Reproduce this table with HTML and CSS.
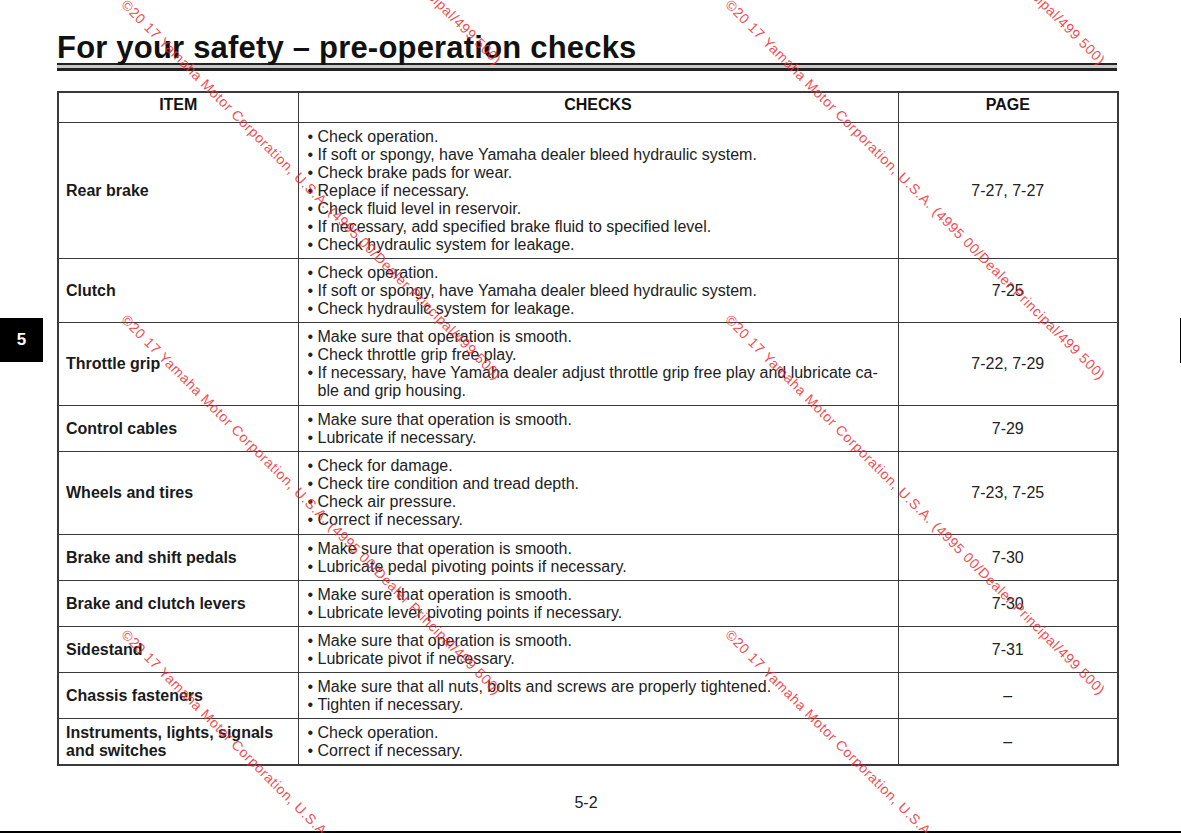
FILE: index.html
```html
<!DOCTYPE html>
<html>
<head>
<meta charset="utf-8">
<title>For your safety – pre-operation checks</title>
<link rel="stylesheet" href="styles.css">
</head>
<body>
<div class="page">
  <div class="margin-left">
    <div class="tab">5</div>
  </div>
  <main class="content">
    <h1 class="title">For your safety – pre-operation checks</h1>
    <div class="rule"></div>
    <table class="checks">
      <colgroup>
        <col class="col-item">
        <col class="col-checks">
        <col class="col-page">
      </colgroup>
      <thead>
        <tr><th>ITEM</th><th>CHECKS</th><th>PAGE</th></tr>
      </thead>
      <tbody>
        <tr>
          <td class="item">Rear brake</td>
          <td class="list"><ul>
            <li>Check operation.</li>
            <li>If soft or spongy, have Yamaha dealer bleed hydraulic system.</li>
            <li>Check brake pads for wear.</li>
            <li>Replace if necessary.</li>
            <li>Check fluid level in reservoir.</li>
            <li>If necessary, add specified brake fluid to specified level.</li>
            <li>Check hydraulic system for leakage.</li>
          </ul></td>
          <td class="pg">7-27, 7-27</td>
        </tr>
        <tr>
          <td class="item">Clutch</td>
          <td class="list"><ul>
            <li>Check operation.</li>
            <li>If soft or spongy, have Yamaha dealer bleed hydraulic system.</li>
            <li>Check hydraulic system for leakage.</li>
          </ul></td>
          <td class="pg">7-25</td>
        </tr>
        <tr class="tall">
          <td class="item">Throttle grip</td>
          <td class="list"><ul>
            <li>Make sure that operation is smooth.</li>
            <li>Check throttle grip free play.</li>
            <li class="nowrap">If necessary, have Yamaha dealer adjust throttle grip free play and lubricate ca-<br>ble and grip housing.</li>
          </ul></td>
          <td class="pg">7-22, 7-29</td>
        </tr>
        <tr>
          <td class="item">Control cables</td>
          <td class="list"><ul>
            <li>Make sure that operation is smooth.</li>
            <li>Lubricate if necessary.</li>
          </ul></td>
          <td class="pg">7-29</td>
        </tr>
        <tr class="tall">
          <td class="item">Wheels and tires</td>
          <td class="list"><ul>
            <li>Check for damage.</li>
            <li>Check tire condition and tread depth.</li>
            <li>Check air pressure.</li>
            <li>Correct if necessary.</li>
          </ul></td>
          <td class="pg">7-23, 7-25</td>
        </tr>
        <tr>
          <td class="item">Brake and shift pedals</td>
          <td class="list"><ul>
            <li>Make sure that operation is smooth.</li>
            <li>Lubricate pedal pivoting points if necessary.</li>
          </ul></td>
          <td class="pg">7-30</td>
        </tr>
        <tr>
          <td class="item">Brake and clutch levers</td>
          <td class="list"><ul>
            <li>Make sure that operation is smooth.</li>
            <li>Lubricate lever pivoting points if necessary.</li>
          </ul></td>
          <td class="pg">7-30</td>
        </tr>
        <tr>
          <td class="item">Sidestand</td>
          <td class="list"><ul>
            <li>Make sure that operation is smooth.</li>
            <li>Lubricate pivot if necessary.</li>
          </ul></td>
          <td class="pg">7-31</td>
        </tr>
        <tr>
          <td class="item">Chassis fasteners</td>
          <td class="list"><ul>
            <li>Make sure that all nuts, bolts and screws are properly tightened.</li>
            <li>Tighten if necessary.</li>
          </ul></td>
          <td class="pg">–</td>
        </tr>
        <tr>
          <td class="item">Instruments, lights, signals and switches</td>
          <td class="list"><ul>
            <li>Check operation.</li>
            <li>Correct if necessary.</li>
          </ul></td>
          <td class="pg">–</td>
        </tr>
      </tbody>
    </table>
    <div class="pagenum">5-2</div>
  </main>
  <div class="margin-right">
    <div class="edge-mark"></div>
  </div>
  <div class="bottom-line"></div>

  <div class="watermarks">
    <span class="wm wm-a1">©20 17 Yamaha Motor Corporation, U.S.A. (4995 00/Dealer Principal/499 500)</span>
    <span class="wm wm-a2">©20 17 Yamaha Motor Corporation, U.S.A. (4995 00/Dealer Principal/499 500)</span>
    <span class="wm wm-a3">©20 17 Yamaha Motor Corporation, U.S.A. (4995 00/Dealer Principal/499 500)</span>
    <span class="wm wm-a4">©20 17 Yamaha Motor Corporation, U.S.A. (4995 00/Dealer Principal/499 500)</span>
    <span class="wm wm-b1">©20 17 Yamaha Motor Corporation, U.S.A. (4995 00/Dealer Principal/499 500)</span>
    <span class="wm wm-b2">©20 17 Yamaha Motor Corporation, U.S.A. (4995 00/Dealer Principal/499 500)</span>
    <span class="wm wm-b3">©20 17 Yamaha Motor Corporation, U.S.A. (4995 00/Dealer Principal/499 500)</span>
    <span class="wm wm-b4">©20 17 Yamaha Motor Corporation, U.S.A. (4995 00/Dealer Principal/499 500)</span>
  </div>
</div>
</body>
</html>
```
FILE: styles.css
```css
* { box-sizing: border-box; }
html, body {
  margin: 0;
  padding: 0;
  background: #fff;
}
body {
  font-family: "Liberation Sans", Arial, Helvetica, sans-serif;
  color: #222;
  width: 1181px;
  height: 833px;
  overflow: hidden;
}
.page {
  position: relative;
  width: 1181px;
  height: 833px;
  display: grid;
  grid-template-columns: 57px 1060px 1fr;
  grid-template-rows: 831px 2px;
  overflow: hidden;
}
.margin-left {
  padding-top: 318px;
}
.tab {
  width: 43px;
  height: 44px;
  background: #000;
  color: #fff;
  font-weight: bold;
  font-size: 17px;
  display: flex;
  align-items: center;
  justify-content: center;
}
.margin-right {
  padding-top: 318px;
  padding-left: 63px;
}
.edge-mark {
  width: 1px;
  height: 45px;
  background: #000;
}
.bottom-line {
  grid-column: 1 / -1;
  background: #000;
}
.content {
  padding-top: 32px;
}
.title {
  margin: 0;
  font-size: 31px;
  line-height: 31px;
  font-weight: bold;
  color: #111;
  letter-spacing: 0.2px;
  white-space: nowrap;
}
.rule {
  height: 8px;
  border-top: 2px solid #222;
  border-bottom: 3px solid #222;
  background: #c8c8c8;
}
.checks {
  margin-top: 20px;
  width: 1060px;
  border-collapse: collapse;
  table-layout: fixed;
  border: 2px solid #3a3a3a;
  font-size: 16px;
  line-height: 18px;
}
.col-item { width: 240px; }
.col-checks { width: 600px; }
.col-page { width: 220px; }
.checks th {
  height: 30px;
  font-size: 16px;
  font-weight: bold;
  color: #111;
  text-align: center;
  vertical-align: middle;
  border: 1px solid #3a3a3a;
  padding: 0 0 4px 0;
}
.checks td {
  border: 1px solid #3a3a3a;
  vertical-align: middle;
  padding: 5px 9px 4px 9px;
}
.checks td.item {
  font-weight: bold;
  color: #1a1a1a;
  padding-left: 7px;
}
.checks td.pg {
  text-align: center;
}
.checks tr.tall td {
  padding-bottom: 5px;
}
.list ul {
  list-style: none;
  margin: 0;
  padding: 0;
}
.list li {
  position: relative;
  padding-left: 10px;
}
.list li::before {
  content: "•";
  position: absolute;
  left: 0;
  top: 0;
}
.list li.nowrap {
  white-space: nowrap;
}
.pagenum {
  margin-top: 28px;
  text-align: center;
  font-size: 16px;
  line-height: 18px;
  color: #222;
  padding-right: 2px;
}
.watermarks {
  position: absolute;
  left: 0;
  top: 0;
  width: 1181px;
  height: 833px;
  pointer-events: none;
}
.wm {
  position: absolute;
  white-space: nowrap;
  font-family: "Liberation Sans", Arial, sans-serif;
  font-size: 14px;
  line-height: 14px;
  color: rgba(240, 40, 45, 0.85);
  transform-origin: 0 50%;
  transform: rotate(45deg);
  letter-spacing: 0.6px;
}
.wm-a1 { left: 124px; top: -320px; }
.wm-a2 { left: 124px; top: -5px; }
.wm-a3 { left: 124px; top: 310px; }
.wm-a4 { left: 124px; top: 625px; }
.wm-b1 { left: 728px; top: -320px; }
.wm-b2 { left: 728px; top: -5px; }
.wm-b3 { left: 728px; top: 310px; }
.wm-b4 { left: 728px; top: 625px; }
```
